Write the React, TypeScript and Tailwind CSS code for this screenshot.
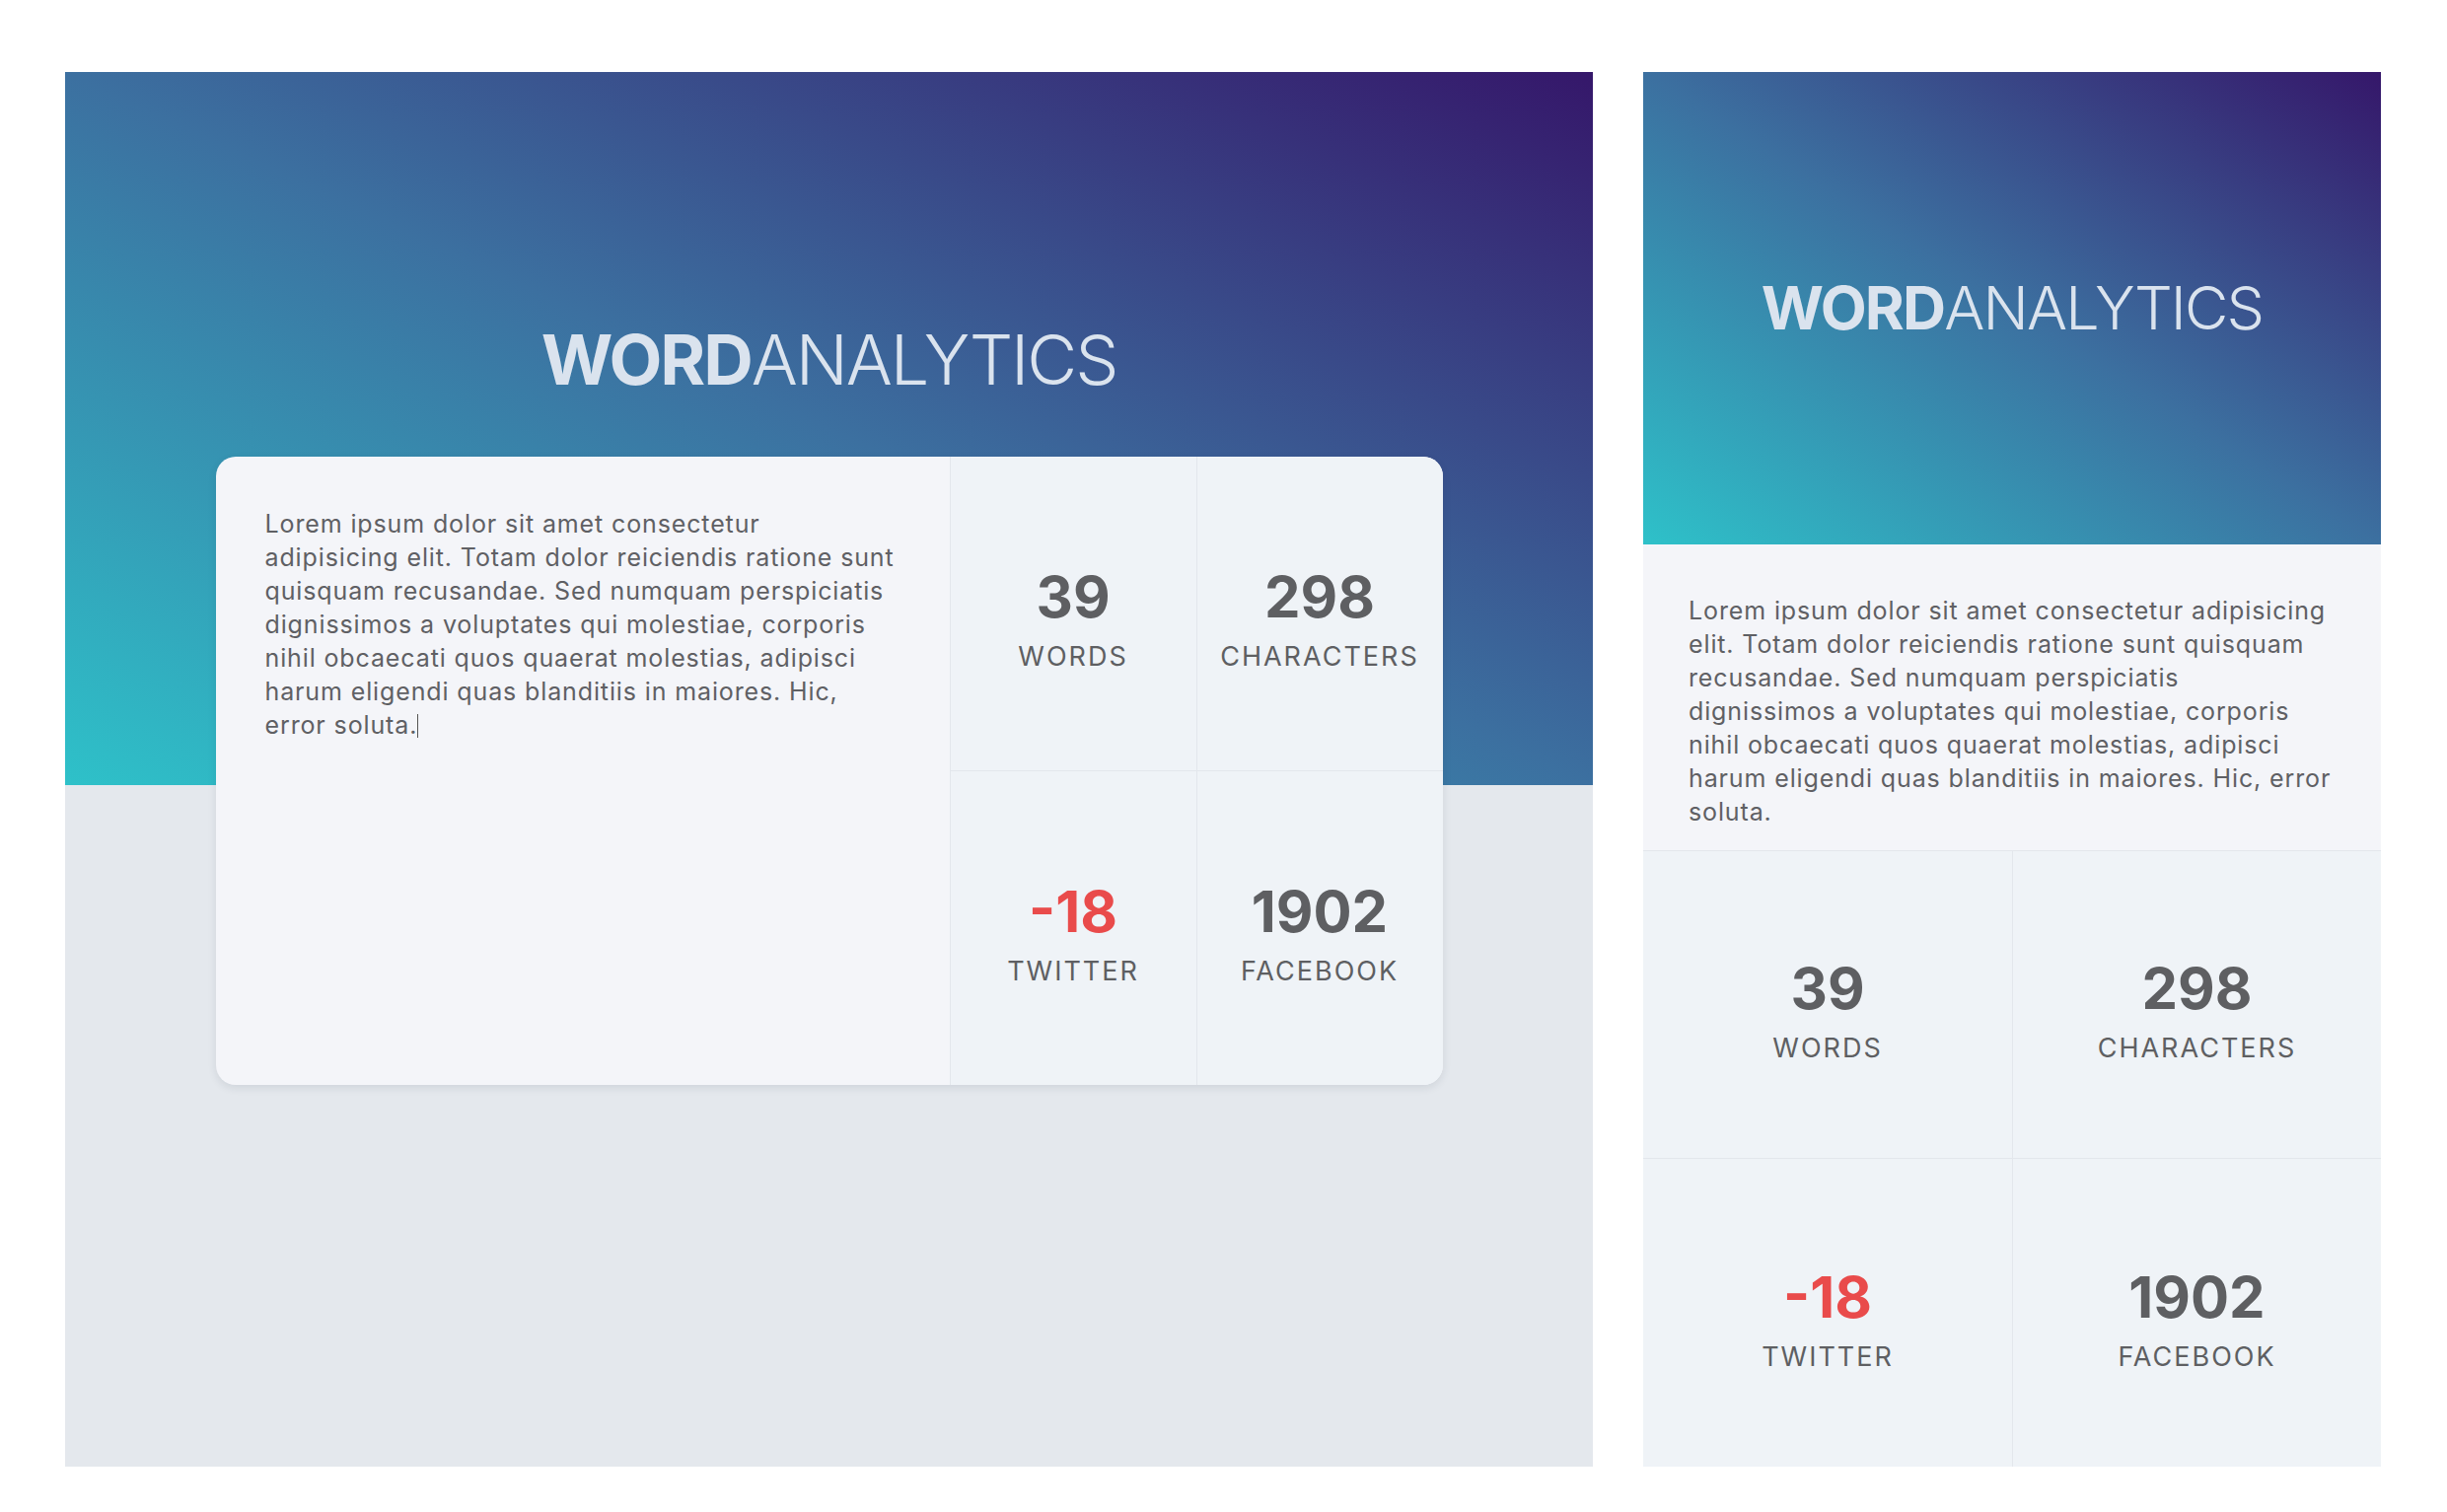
import React from 'react'

interface Stat {
  value: string
  label: string
  negative?: boolean
}

const stats: Stat[] = [
  { value: '39', label: 'Words' },
  { value: '298', label: 'Characters' },
  { value: '-18', label: 'Twitter', negative: true },
  { value: '1902', label: 'Facebook' }
]

const wideLines = [
  'Lorem ipsum dolor sit amet consectetur',
  'adipisicing elit. Totam dolor reiciendis ratione sunt',
  'quisquam recusandae. Sed numquam perspiciatis',
  'dignissimos a voluptates qui molestiae, corporis',
  'nihil obcaecati quos quaerat molestias, adipisci',
  'harum eligendi quas blanditiis in maiores. Hic,',
  'error soluta.'
]

const narrowLines = [
  'Lorem ipsum dolor sit amet consectetur adipisicing',
  'elit. Totam dolor reiciendis ratione sunt quisquam',
  'recusandae. Sed numquam perspiciatis',
  'dignissimos a voluptates qui molestiae, corporis',
  'nihil obcaecati quos quaerat molestias, adipisci',
  'harum eligendi quas blanditiis in maiores. Hic, error',
  'soluta.'
]

const Logo: React.FC<{ size: string }> = ({ size }) => (
  <h1 className={`${size} leading-none text-[#dae3ee] tracking-[-0.03em]`}>
    <span className="font-bold">WORD</span>
    <span className="font-light">ANALYTICS</span>
  </h1>
)

const StatCell: React.FC<{ stat: Stat; className?: string }> = ({ stat, className }) => (
  <div className={`flex flex-col items-center justify-center pt-[12px] bg-[#eff3f7] border-[#e3e7ec] ${className ?? ''}`}>
    <span
      className={`text-[58px] font-bold leading-none ${
        stat.negative ? 'text-[#e94b4b]' : 'text-[#5e5f62]'
      }`}
    >
      {stat.value}
    </span>
    <span className="mt-[18px] text-[27px] leading-none uppercase tracking-[2px] text-[#5e5f62]">
      {stat.label}
    </span>
  </div>
)

const TextBlock: React.FC<{ lines: string[]; caret?: boolean }> = ({ lines, caret }) => (
  <div className="text-[25px] leading-[34px] tracking-[0.035em] text-[#5f6064] whitespace-nowrap">
    {lines.map((line, i) => (
      <div key={i}>
        {line}
        {caret && i === lines.length - 1 && (
          <span className="inline-block w-px h-[24px] bg-[#555] align-[-4px]" />
        )}
      </div>
    ))}
  </div>
)

export default function App() {
  return (
    <div className="w-full h-[1533px] bg-white flex gap-[51px] pl-[66px] pt-[73px] font-['Inter',sans-serif]">
      {/* Desktop preview */}
      <div className="w-[1549px] h-[1414px] bg-[#e4e8ed] flex flex-col">
        <div className="h-[723px] shrink-0 pt-[257px] flex justify-center bg-[linear-gradient(to_top_right,#2ec1c9,#3c70a0_50%,#35176a)]">
          <Logo size="text-[70px]" />
        </div>

        <div className="mx-auto -mt-[333px] w-[1244px] h-[637px] rounded-[20px] overflow-hidden grid grid-cols-[744px_250px_250px] grid-rows-2 bg-[#f4f5f9] shadow-[0_3px_8px_rgba(30,40,60,0.10)]">
          <div className="row-span-2 pl-[50px] pt-[51px]">
            <TextBlock lines={wideLines} caret />
          </div>
          <StatCell stat={stats[0]} className="border-l border-b" />
          <StatCell stat={stats[1]} className="border-l border-b" />
          <StatCell stat={stats[2]} className="border-l" />
          <StatCell stat={stats[3]} className="border-l" />
        </div>
      </div>

      {/* Mobile preview */}
      <div className="w-[748px] h-[1414px] flex flex-col bg-[#f4f5f9]">
        <div className="h-[479px] shrink-0 flex items-center justify-center bg-[linear-gradient(to_top_right,#2ec1c9,#3c70a0_50%,#35176a)]">
          <Logo size="text-[61px]" />
        </div>
        <div className="h-[311px] shrink-0 pl-[46px] pt-[50px] border-b border-[#e3e7ec]">
          <TextBlock lines={narrowLines} />
        </div>
        <div className="flex-1 grid grid-cols-2 grid-rows-2">
          <StatCell stat={stats[0]} className="border-b" />
          <StatCell stat={stats[1]} className="border-l border-b" />
          <StatCell stat={stats[2]} />
          <StatCell stat={stats[3]} className="border-l" />
        </div>
      </div>
    </div>
  )
}
